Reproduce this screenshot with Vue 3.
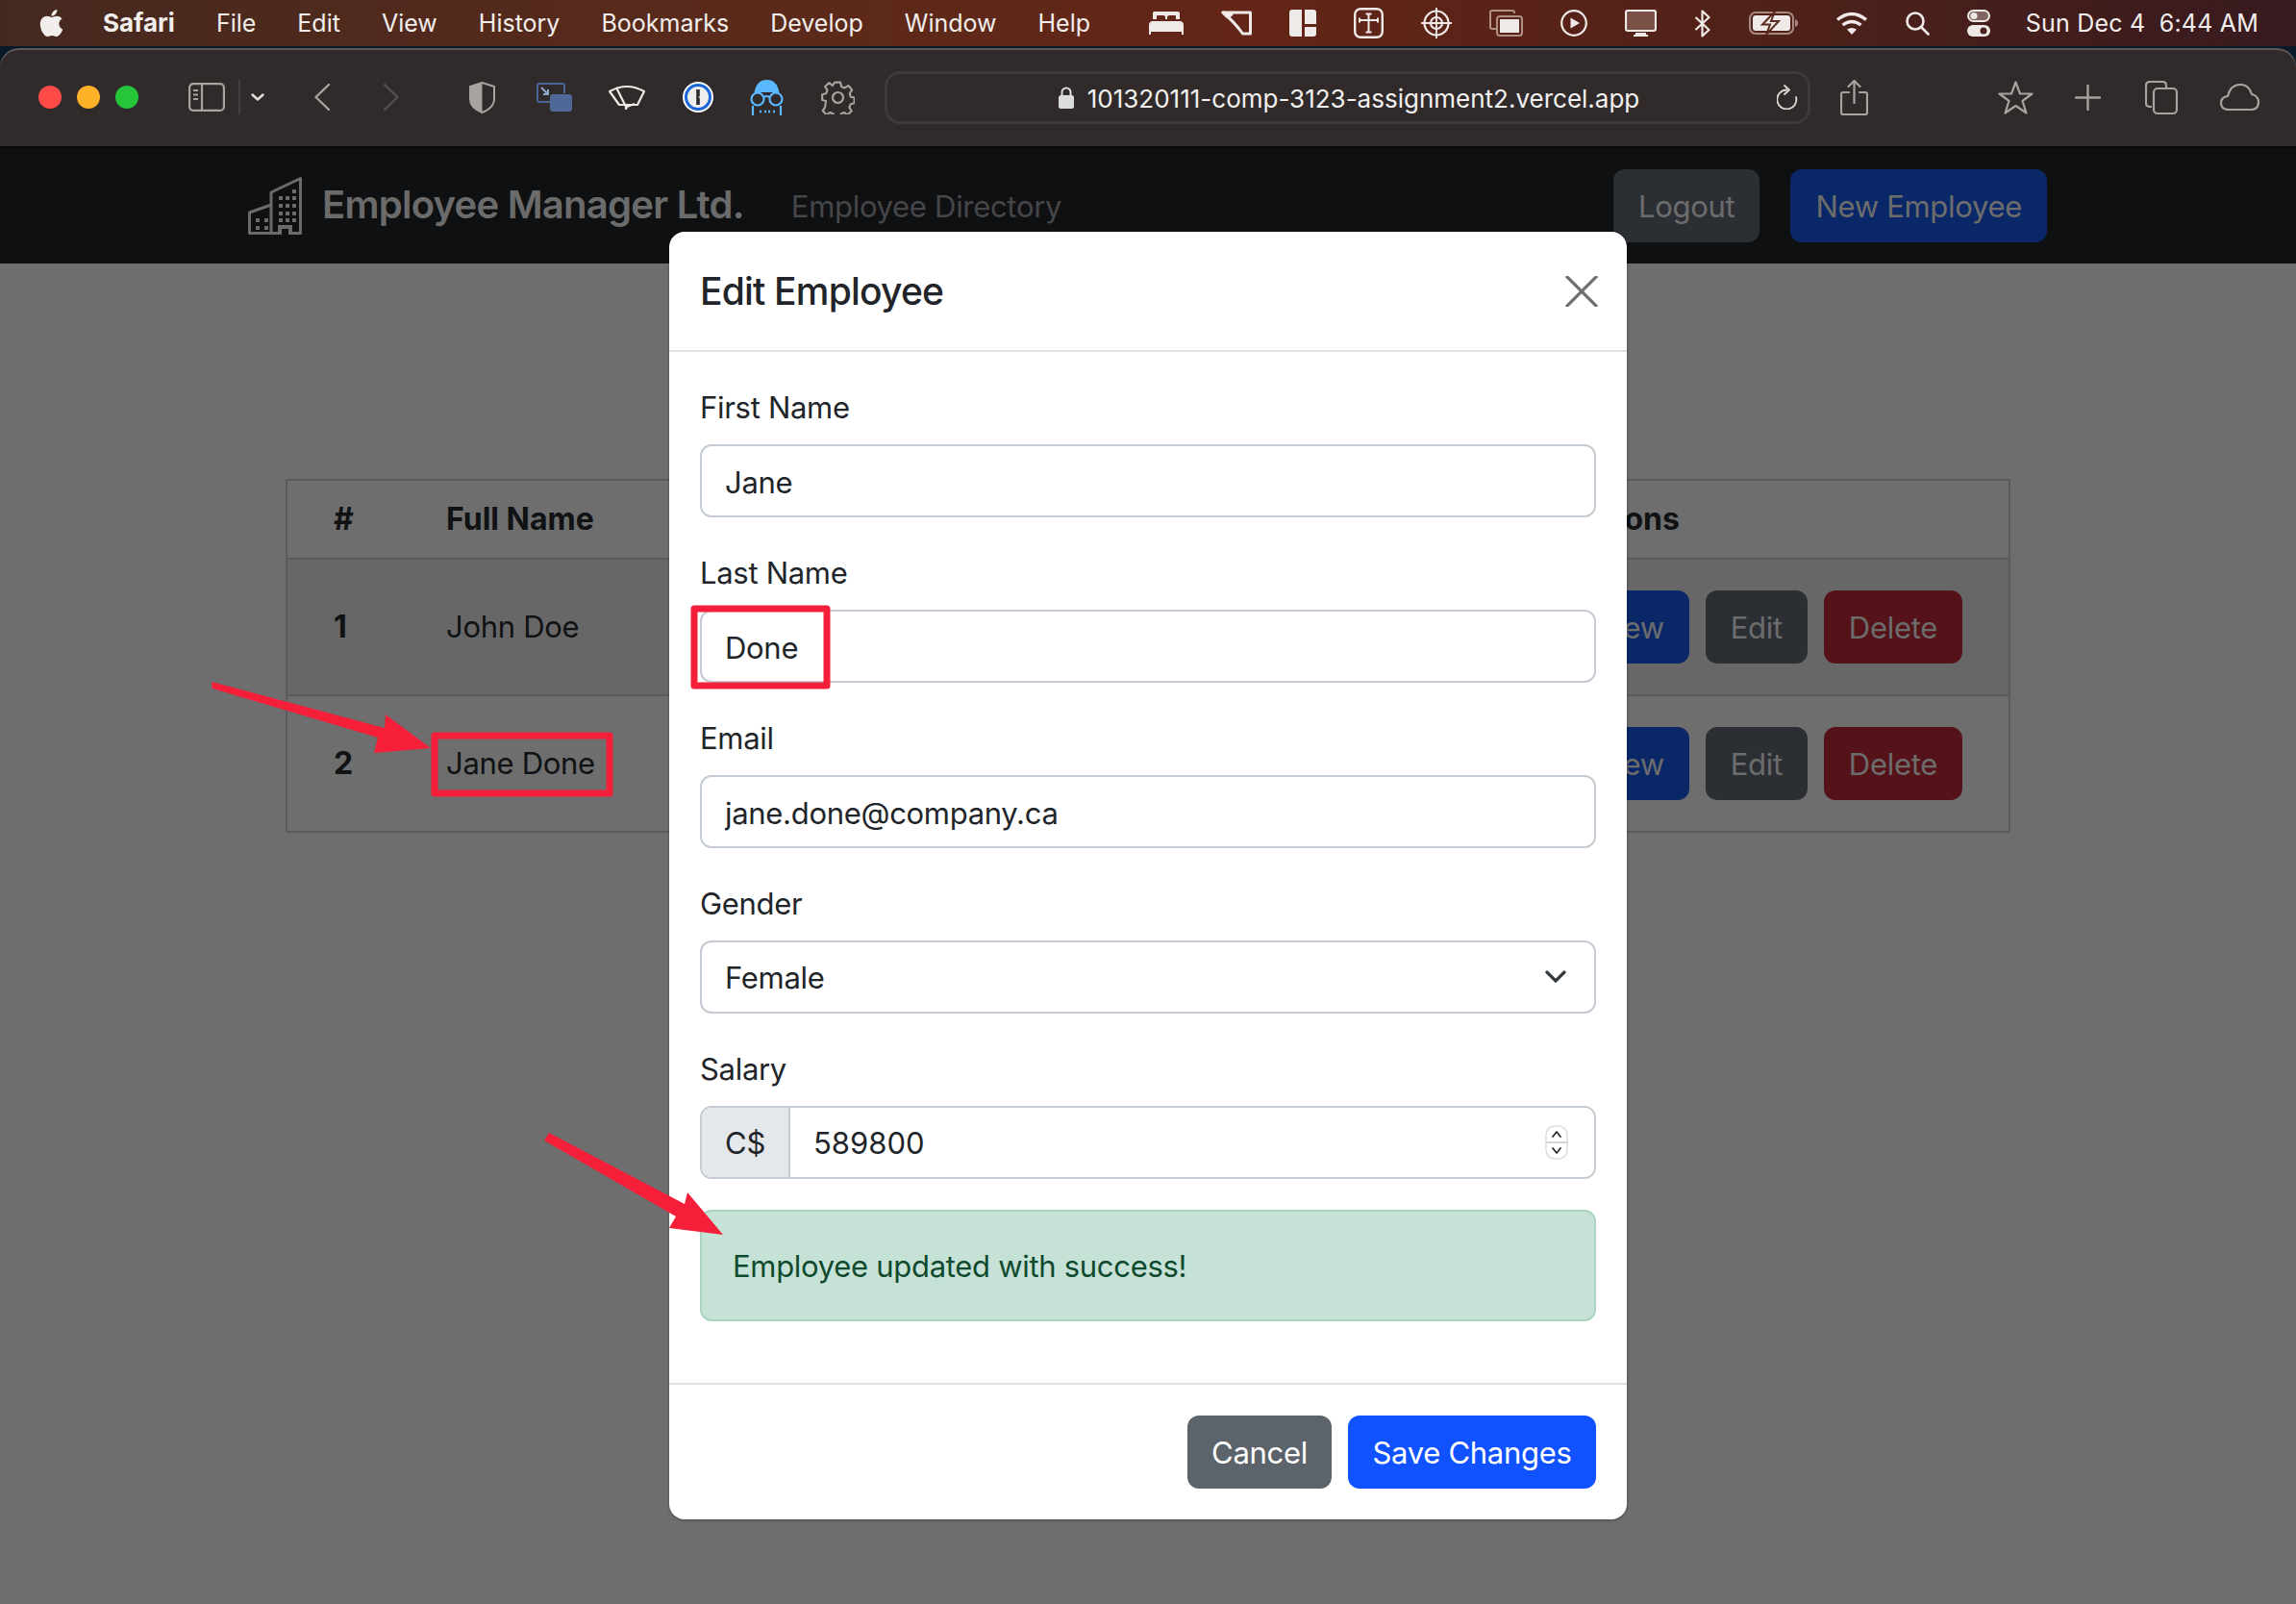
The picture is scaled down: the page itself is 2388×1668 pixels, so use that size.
<script setup>
const menus = ['File', 'Edit', 'View', 'History', 'Bookmarks', 'Develop', 'Window', 'Help']

const employees = [
  { id: 1, name: 'John Doe', email: 'john.doe@company.ca', striped: true },
  { id: 2, name: 'Jane Done', email: 'jane.done@company.ca', striped: false },
]

const fields = [
  { label: 'First Name', value: 'Jane' },
  { label: 'Last Name', value: 'Done' },
  { label: 'Email', value: 'jane.done@company.ca' },
]

const towerWindows = [[46, 13]]
for (const y of [20, 28, 36, 43]) {
  for (const x of [32, 39, 46]) towerWindows.push([x, y])
}
const blockWindows = [[8, 43], [17, 43], [8, 51], [17, 51]]
</script>

<template>
  <div class="screen">
    <header class="menubar">
      <div class="menubar__left">
        <svg class="apple" width="27" height="32" viewBox="0 0 384 512" fill="#f1eeec">
          <path d="M318.7 268.7c-.2-36.7 16.4-64.4 50-84.8-18.8-26.9-47.2-41.7-84.7-44.6-35.5-2.8-74.3 20.7-88.5 20.7-15 0-49.4-19.7-76.4-19.7C63.3 141.2 4 184.8 4 273.5q0 39.3 14.4 81.2c12.8 36.7 59 126.7 107.2 125.2 25.2-.6 43-17.9 75.8-17.9 31.8 0 48.3 17.9 76.4 17.9 48.6-.7 90.4-82.5 102.6-119.3-65.2-30.7-61.7-90-61.7-91.9zm-56.6-164.2c27.3-32.4 24.8-61.9 24-72.5-24.1 1.4-52 16.4-67.9 34.9-17.5 19.8-27.8 44.3-25.6 71.9 26.1 2 49.9-11.4 69.5-34.3z" />
        </svg>
        <strong class="menubar__app">Safari</strong>
        <span v-for="m in menus" :key="m">{{ m }}</span>
      </div>
      <div class="menubar__right">
        <div class="status">
          <!-- bed -->
          <svg width="36" height="24" viewBox="0 0 36 24" fill="#efeae8">
            <path d="M4 1.500Q4 0 6 0h24q2 0 2 1.500V8h-4V5q0-1-1-1h-6q-2 0-2 2v2h-2V6q0-2-2-2H9Q8 4 8 5v3H4zM3 10h30q3 1 3 4v10h-2v-3H2v3H0V14q0-3 3-4z" />
          </svg>
          <!-- cone -->
          <svg width="32" height="26" viewBox="0 0 32 26" fill="none" stroke="#efeae8" stroke-width="3" stroke-linejoin="round">
            <path d="M2 2h28.500v22h-8Q14 12 2 2z" />
            <path d="M2 2l9 2-4 3z" fill="#efeae8" />
          </svg>
          <!-- layout -->
          <svg width="28" height="28" viewBox="0 0 28 28" fill="#efeae8">
            <path d="M3 0h10v28H3q-3 0-3-3V3q0-3 3-3zM16 0h9q3 0 3 3v12H16zM16 18h12v7q0 3-3 3h-9z" />
          </svg>
          <!-- framed cross -->
          <svg width="31" height="32" viewBox="0 0 31 32" fill="none" stroke="#efeae8" stroke-width="2">
            <rect x="1.200" y="1.200" width="28.600" height="29.600" rx="6" stroke-width="2.400" />
            <path d="M15.500 6v19M6 13h19M12.500 6.500h6M12.500 25.500h6M6 10.500v5M25 10.500v5" />
          </svg>
          <!-- target -->
          <svg width="32" height="32" viewBox="0 0 32 32" fill="none" stroke="#efeae8" stroke-width="2.200">
            <circle cx="16" cy="16" r="12.500" />
            <circle cx="16" cy="16" r="6" />
            <path d="M16 0v32M0 16h32" stroke-width="1.800" />
          </svg>
          <!-- windows -->
          <svg width="35" height="28" viewBox="0 0 35 28">
            <path d="M26 4V3q0-2-2-2H3Q1 1 1 3v15q0 2 2 2h4" fill="none" stroke="#b08f86" stroke-width="2" />
            <rect x="8" y="7" width="26" height="20" rx="3" fill="none" stroke="#b08f86" stroke-width="2" />
            <rect x="11" y="10" width="20" height="14" fill="#efeae8" />
          </svg>
          <!-- play -->
          <svg width="28" height="28" viewBox="0 0 28 28" fill="none" stroke="#efeae8" stroke-width="2.200">
            <circle cx="14" cy="14" r="12.800" />
            <path d="M10.500 8.500l9.500 5.500-9.500 5.500z" fill="#efeae8" stroke="none" />
          </svg>
          <!-- monitor -->
          <svg width="33" height="28" viewBox="0 0 33 28">
            <rect x="1" y="1" width="31" height="21" rx="2" fill="#7a4f46" stroke="#efeae8" stroke-width="2.200" />
            <path d="M11 24h11v2h2v2H9v-2h2z" fill="#efeae8" />
          </svg>
          <!-- bluetooth -->
          <svg width="18" height="29" viewBox="0 0 18 29" fill="none" stroke="#efeae8" stroke-width="2.200" stroke-linejoin="round">
            <path d="M1.500 8l14 13-7 6.500V1.500l7 6.500-14 13" />
          </svg>
          <!-- battery -->
          <svg width="51" height="24" viewBox="0 0 51 24">
            <rect x="1" y="1" width="45" height="22" rx="6" fill="none" stroke="#a98a83" stroke-width="2" />
            <rect x="4" y="4" width="39" height="16" rx="3" fill="#efeae8" />
            <path d="M48 8q3 1 3 4t-3 4z" fill="#a98a83" />
            <path d="M27 0L14 13.500h8L18 24l13-14h-8z" fill="#efeae8" stroke="#5a2a20" stroke-width="2" />
          </svg>
          <!-- wifi -->
          <svg width="34" height="25" viewBox="0 0 34 25" fill="none" stroke="#efeae8" stroke-width="3.400">
            <path d="M2 8.500q15-12 30 0M7.500 14q9.500-7 19 0" />
            <path d="M12 18.500q5-3 10 0l-5 5.500z" fill="#efeae8" stroke="none" />
          </svg>
          <!-- search -->
          <svg width="25" height="25" viewBox="0 0 25 25" fill="none" stroke="#efeae8" stroke-width="2.600" stroke-linecap="round">
            <circle cx="10" cy="10" r="8.500" />
            <path d="M16.500 16.500l7 7" />
          </svg>
          <!-- control centre -->
          <svg width="24" height="28" viewBox="0 0 24 28">
            <rect x="1" y="1" width="22" height="11" rx="5.500" fill="#efeae8" fill-opacity=".35" stroke="#efeae8" stroke-width="2" />
            <circle cx="7" cy="6.500" r="3.500" fill="#efeae8" />
            <rect x="0" y="16" width="24" height="12" rx="6" fill="#efeae8" />
            <circle cx="17" cy="22" r="3.500" fill="#4a2320" />
          </svg>
        </div>
        <span class="menubar__clock">Sun Dec 4&nbsp; 6:44 AM</span>
      </div>
    </header>

    <div class="window">
      <div class="toolbar">
        <div class="lights">
          <i class="light light--red"></i>
          <i class="light light--yellow"></i>
          <i class="light light--green"></i>
        </div>

        <div class="sidebar-btn">
          <svg width="38" height="30" viewBox="0 0 38 30" fill="none" stroke="#a8a3a1" stroke-width="2.200">
            <rect x="1.100" y="1.100" width="35.800" height="27.800" rx="4" />
            <path d="M14 1v28" />
            <path d="M5 8h5M5 12.500h5M5 17h5" stroke-width="1.800" />
          </svg>
          <span class="sidebar-btn__rule"></span>
          <svg width="14" height="8" viewBox="0 0 14 8" fill="none" stroke="#e0dcda" stroke-width="2.400" stroke-linecap="round" stroke-linejoin="round">
            <path d="M1.500 1.500L7 6.500l5.500-5" />
          </svg>
        </div>

        <div class="nav-arrows">
          <svg width="16" height="28" viewBox="0 0 16 28" fill="none" stroke="#a8a3a1" stroke-width="2.400" stroke-linecap="round" stroke-linejoin="round">
            <path d="M15 1L1.500 14 15 27" />
          </svg>
          <svg width="16" height="28" viewBox="0 0 16 28" fill="none" stroke="#55504f" stroke-width="2.400" stroke-linecap="round" stroke-linejoin="round">
            <path d="M1 1l13.500 13L1 27" />
          </svg>
        </div>

        <div class="extensions">
          <!-- shield -->
          <svg class="shield" width="27" height="33" viewBox="0 0 27 33">
            <path d="M13.500 1L26 5v13q0 9-12.500 14Q1 27 1 18V5z" fill="none" stroke="#a8a3a1" stroke-width="2" />
            <path d="M13.500 1v31Q1 27 1 18V5z" fill="#a8a3a1" />
          </svg>
          <!-- picture in picture -->
          <svg width="37" height="30" viewBox="0 0 37 30">
            <path d="M14 20H3q-2 0-2-2V3q0-2 2-2h24q2 0 2 2v8" fill="none" stroke="#4a6496" stroke-width="2" />
            <rect x="14" y="12" width="23" height="18" rx="3" fill="#4f6897" />
            <path d="M5 5l7 7M12 7v5H7" fill="none" stroke="#8fa6cf" stroke-width="2" />
          </svg>
          <!-- wiper -->
          <svg width="38" height="28" viewBox="0 0 38 28" fill="none" stroke="#ece8e6" stroke-width="2.200" stroke-linejoin="round">
            <path d="M1 8Q19-2 37 8l-7 14H11z" fill="none" />
            <path d="M8 4l11 22M18 27v-4M19 24l8-3" />
          </svg>
          <!-- 1password -->
          <svg width="32" height="32" viewBox="0 0 32 32">
            <circle cx="16" cy="16" r="16" fill="#fff" />
            <circle cx="16" cy="16" r="12.500" fill="#eeeeee" stroke="#1a66d8" stroke-width="3" />
            <path d="M14.200 8h3.600v7l-1.500 1 1.500 1v7h-3.600z" fill="#2b2b2b" />
          </svg>
          <!-- glasses ghost -->
          <svg width="35" height="37" viewBox="0 0 35 37" fill="none" stroke="#5ab8ff" stroke-width="2.200">
            <path d="M4.500 13Q7 0 17.500 0T30.500 13z" fill="#5ab8ff" stroke="none" />
            <circle cx="8" cy="20" r="6.500" />
            <circle cx="27" cy="20" r="6.500" />
            <path d="M14.500 18q3-2 6 0M3 27v10M32 27v10" />
            <path d="M10 33h2M15 33h2M19 33h2M24 33h2" stroke-width="2.400" />
          </svg>
          <!-- gear -->
          <svg width="35" height="35" viewBox="0 0 35 35" fill="none" stroke="#a8a3a1" stroke-width="2.200" stroke-linejoin="round">
            <path d="M14.500 1.500h6l1 4.500 3.500 1.500 4-2.500 4 4.500-2.500 4 1 3.500 4 .8v6l-4 1-1.500 3.500 2.500 4-4.500 4-3.500-2.500-3.500 1.500-1 4h-6l-1-4-3.500-1.500-4 2.500-4-4.500 2.500-3.500L5 21.500l-4-1v-6l4-1L6.500 10 4 6l4.500-4L12 5z" transform="scale(.97) translate(.2 .2)" />
            <circle cx="17.500" cy="17.500" r="5.500" />
          </svg>
        </div>

        <div class="address">
          <span></span>
          <span class="address__url">
            <svg width="16" height="23" viewBox="0 0 16 23">
              <path d="M3.500 10V6a4.500 4.500 0 0 1 9 0v4" fill="none" stroke="#dcdcdc" stroke-width="2" />
              <rect x="0" y="9" width="16" height="14" rx="2.500" fill="#dcdcdc" />
            </svg>
            <span class="address__text">101320111-comp-3123-assignment2.vercel.app</span>
          </span>
          <svg class="address__reload" width="22" height="26" viewBox="0 0 22 26" fill="none" stroke="#dedbd9" stroke-width="1.800" stroke-linecap="round" stroke-linejoin="round">
            <path d="M10 5.500A10 10 0 1 0 20 13M8 1l5 4.500L8 10" />
          </svg>
        </div>

        <svg class="share" width="29" height="37" viewBox="0 0 29 37" fill="none" stroke="#a8a3a1" stroke-width="2.200" stroke-linecap="round" stroke-linejoin="round">
          <path d="M9 13H3q-2 0-2 2v19q0 2 2 2h23q2 0 2-2V15q0-2-2-2h-6M14.500 24V1M8.500 7l6-6 6 6" />
        </svg>

        <div class="tab-actions">
          <svg width="37" height="35" viewBox="0 0 37 35" fill="none" stroke="#a8a3a1" stroke-width="2.200" stroke-linejoin="round">
            <path d="M18.500 1.500l4.500 12h12.500l-10 7.500 4 12.500-11-7.500-11 7.500 4-12.500-10-7.500H14z" />
          </svg>
          <svg class="plus" width="27" height="27" viewBox="0 0 27 27" stroke="#a8a3a1" stroke-width="2.400" stroke-linecap="round">
            <path d="M13.500 1v25M1 13.500h25" />
          </svg>
          <svg class="tabs" width="34" height="35" viewBox="0 0 34 35" fill="none" stroke="#a8a3a1" stroke-width="2.200">
            <path d="M7 27H5q-4 0-4-4V5q0-4 4-4h13q4 0 4 4v2" />
            <rect x="9" y="8" width="24" height="26" rx="4" />
          </svg>
          <svg class="cloud" width="41" height="28" viewBox="0 0 41 28" fill="none" stroke="#a8a3a1" stroke-width="2.200" stroke-linejoin="round">
            <path d="M9 27Q1 27 1 20q0-6 7-7Q11 1 21 1q9 0 12 10 7 2 7 8 0 8-8 8z" />
          </svg>
        </div>
      </div>

      <div class="page">
        <nav class="navbar">
          <div class="navbar__brand">
            <svg width="56" height="60" viewBox="0 0 56 60">
              <path d="M24 29L1.500 37v21.500h53V1.500L24 16zM24 16v42" fill="none" stroke="#d6d6d6" stroke-width="3" stroke-linejoin="round" />
              <rect x="31" y="50" width="15" height="10" fill="#d6d6d6" />
              <rect x="35" y="54" width="7" height="6" fill="#1e2024" />
              <rect v-for="(w, i) in towerWindows" :key="'t' + i" :x="w[0]" :y="w[1]" width="4" height="4" fill="#d6d6d6" />
              <rect v-for="(w, i) in blockWindows" :key="'b' + i" :x="w[0]" :y="w[1]" width="4" height="4" fill="#d6d6d6" />
            </svg>
            <span class="navbar__title">Employee Manager Ltd.</span>
            <span class="navbar__sub">Employee Directory</span>
          </div>
          <div class="navbar__actions">
            <button class="btn btn--grey">Logout</button>
            <button class="btn btn--blue">New Employee</button>
          </div>
        </nav>

        <main class="content">
          <table class="table">
            <colgroup>
              <col class="col-id" />
              <col class="col-name" />
              <col class="col-email" />
              <col />
            </colgroup>
            <thead>
              <tr>
                <th>#</th>
                <th>Full Name</th>
                <th>Email</th>
                <th>Actions</th>
              </tr>
            </thead>
            <tbody>
              <tr v-for="e in employees" :key="e.id" :class="{ striped: e.striped }">
                <th>{{ e.id }}</th>
                <td>{{ e.name }}</td>
                <td>{{ e.email }}</td>
                <td>
                  <div class="table__actions">
                    <button class="btn btn--blue">View</button>
                    <button class="btn btn--grey">Edit</button>
                    <button class="btn btn--red">Delete</button>
                  </div>
                </td>
              </tr>
            </tbody>
          </table>
        </main>

        <div class="backdrop"></div>

        <section class="modal">
          <header class="modal__header">
            <h5 class="modal__title">Edit Employee</h5>
            <svg width="34" height="32" viewBox="0 0 34 32" fill="none" stroke="#6f6f6f" stroke-width="3.200">
              <path d="M1 0l32 32M33 0L1 32" />
            </svg>
          </header>

          <div class="modal__body">
            <div v-for="f in fields" :key="f.label" class="field">
              <label class="field__label">{{ f.label }}</label>
              <input class="control" type="text" :value="f.value" />
            </div>

            <div class="field">
              <label class="field__label">Gender</label>
              <div class="select">
                <select class="control control--select">
                  <option>Female</option>
                  <option>Male</option>
                </select>
                <svg class="select__chevron" width="22" height="14" viewBox="0 0 22 14" fill="none" stroke="#343a40" stroke-width="3.200" stroke-linecap="round" stroke-linejoin="round">
                  <path d="M2 2l9 9 9-9" />
                </svg>
              </div>
            </div>

            <div class="field">
              <label class="field__label">Salary</label>
              <div class="group">
                <span class="group__addon">C$</span>
                <input class="group__input" type="text" value="589800" />
                <svg class="group__spin" width="24" height="36" viewBox="0 0 24 36">
                  <rect x="1" y="1" width="22" height="34" rx="9" fill="#fff" stroke="#dcdcdc" stroke-width="1.500" />
                  <path d="M1 18h22" stroke="#d4d4d4" stroke-width="2" />
                  <path d="M8 12l4-5 4 5M8 24l4 5 4-5" fill="none" stroke="#2c2c2c" stroke-width="1.800" stroke-linecap="round" stroke-linejoin="round" />
                </svg>
              </div>
            </div>

            <div class="alert">Employee updated with success!</div>
          </div>

          <footer class="modal__footer">
            <button class="btn btn--cancel">Cancel</button>
            <button class="btn btn--save">Save Changes</button>
          </footer>
        </section>
      </div>
    </div>

    <!-- red annotations drawn over the screenshot -->
    <svg class="markup" width="2388" height="1668" viewBox="0 0 2388 1668">
      <g fill="#f51f3a">
        <path d="M220 709L400 757 401 743 448 778 389 783 393 767 221 716z" />
        <path d="M571 1178L712 1252 715 1240 752 1284 696 1277 703 1265 566 1186z" />
      </g>
      <g fill="none" stroke="#f51f3a" stroke-width="7" stroke-linejoin="round">
        <rect x="452" y="765" width="182" height="60" />
        <rect x="722" y="633" width="138" height="80" />
      </g>
    </svg>
  </div>
</template>

<style>
html, body { margin: 0; background: #0b1a28; }
</style>

<style scoped>
.screen {
  position: relative; width: 2388px; height: 1668px;
  overflow: hidden; display: flex; flex-direction: column;
  font-family: Inter, "Liberation Sans", sans-serif;
  background: #0b1a28;
}

.menubar {
  height: 48px; flex-shrink: 0;
  display: flex; align-items: center; justify-content: space-between;
  padding: 0 39px 0 40px;
  background: linear-gradient(90deg, #45291f 0%, #5c2a1a 35%, #632517 55%, #4e2119 78%, #371a1f 100%);
  color: #f1eeec; font-size: 25px; line-height: 1;
}
.menubar__left { display: flex; align-items: center; gap: 43px; }
.apple { margin-right: -3px; }
.menubar__app { font-size: 26px; font-weight: 700; }
.menubar__right { display: flex; align-items: center; gap: 37px; }
.menubar__clock { white-space: nowrap; letter-spacing: 0.2px; }
.status { display: flex; align-items: center; gap: 39px; }

.window {
  flex: 1; margin-top: 2px; min-height: 0;
  display: flex; flex-direction: column;
  border-radius: 20px 20px 0 0; overflow: hidden;
  background: #302b2a;
  box-shadow: inset 0 2px 0 #5e5957;
}

.toolbar {
  height: 102px; flex-shrink: 0; display: flex; align-items: center;
  padding-left: 40px;
  border-bottom: 2px solid #0a0a0a;
}
.lights { display: flex; gap: 16px; }
.light { width: 24px; height: 24px; border-radius: 50%; display: block; }
.light--red { background: #ff4a48; }
.light--yellow { background: #ffb128; }
.light--green { background: #27c63a; }

.sidebar-btn { display: flex; align-items: center; gap: 11px; margin-left: 52px; }
.sidebar-btn__rule { width: 2px; height: 36px; margin-left: 3px; background: #443f3e; }

.nav-arrows { display: flex; gap: 56px; margin-left: 52px; }

.extensions { display: flex; align-items: center; gap: 38.5px; margin-left: 73px; }
.shield { margin-right: 4px; }

.address {
  width: 963px; height: 55px; margin-left: 31px; box-sizing: border-box;
  display: grid; grid-template-columns: 1fr auto 1fr; align-items: center;
  border: 3px solid #3f3a39; border-radius: 16px;
  color: #f3f1f0; font-size: 26px;
}
.address__url { display: flex; align-items: center; gap: 14px; white-space: nowrap; margin-left: 4px; }
.address__text { padding-top: 2px; }
.address__reload { justify-self: end; margin-right: 10px; }

.share { margin-left: 31px; }
.tab-actions { display: flex; align-items: center; margin-left: 135px; }
.plus { margin-left: 43px; }
.tabs { margin-left: 46px; }
.cloud { margin-left: 44px; }

.page {
  position: relative; flex: 1; min-height: 0;
  background: #dcdcdc; color: #212529;
  font-size: 31px; line-height: 48px; letter-spacing: -0.3px;
}

.navbar {
  height: 120px; box-sizing: border-box;
  display: flex; align-items: center; justify-content: space-between;
  padding: 0 259px 0 258px;
  background: #1e2024;
}
.navbar__brand { display: flex; align-items: center; }
.navbar__title { margin: -2px 0 0 21px; color: #d6d6d6; font-size: 40px; font-weight: 600; letter-spacing: -0.75px; }
.navbar__sub { margin-left: 49px; padding-top: 1px; color: #8a8c90; }
.navbar__actions { display: flex; gap: 32px; }

.btn {
  height: 76px; padding: 2px 26px 0; border: 0; border-radius: 12px; box-sizing: border-box;
  font: inherit; letter-spacing: inherit; color: #d9d9d9; white-space: nowrap;
}
.btn--grey { background: #565c66; }
.btn--blue { background: #1450d0; }
.btn--red { background: #aa2430; }
.btn--cancel { background: #5c636a; color: #fff; width: 150px; padding: 2px 0 0; }
.btn--save { background: #1052ff; color: #fff; width: 258px; padding: 2px 0 0; }

.content { padding: 224px 297px 0 297px; }
.table { width: 100%; border-collapse: collapse; table-layout: fixed; border: 2px solid #b0b4ba; }
.col-id { width: 118px; }
.col-name { width: 460px; }
.col-email { width: 703px; }
.table th, .table td { padding: 16px 48px; text-align: left; border-bottom: 2px solid #b0b4ba; }
.table th { font-weight: 700; font-size: 32px; letter-spacing: 0; }
.table tbody tr { height: 142px; }
.table thead th { height: 81px; box-sizing: border-box; }
.striped { background: #cecece; }
.table__actions { display: flex; gap: 17px; justify-content: flex-end; }

.backdrop { position: absolute; inset: 0; background: rgba(0, 0, 0, 0.5); }

.modal {
  position: absolute; left: 696px; top: 87px; width: 996px;
  background: #fff; border-radius: 16px;
  box-shadow: 0 1px 3px rgba(0, 0, 0, 0.35);
}
.modal__header {
  height: 125px; box-sizing: border-box;
  display: flex; align-items: center; justify-content: space-between;
  padding: 0 30px 0 32px; border-bottom: 2px solid #dee2e6;
}
.modal__title { margin: 0; font-size: 39px; line-height: 60px; font-weight: 500; letter-spacing: -0.8px; }
.modal__body { padding: 32px; }
.field { margin-bottom: 32px; }
.field__label { display: block; margin-bottom: 14px; padding-top: 2px; }

.control {
  display: block; width: 100%; height: 76px; box-sizing: border-box;
  padding: 2px 24px 0; border: 2px solid #c5cbd3; border-radius: 12px;
  background: #fff; color: #212529; font: inherit; letter-spacing: inherit; outline: none;
}
.select { position: relative; }
.control--select { appearance: none; }
.select__chevron { position: absolute; right: 31px; top: 31px; }

.group {
  position: relative; display: flex; height: 76px; box-sizing: border-box;
  border: 2px solid #c5cbd3; border-radius: 12px; overflow: hidden;
}
.group__addon {
  width: 90px; flex-shrink: 0; display: flex; align-items: center; justify-content: center;
  padding-top: 2px; background: #e4e7eb; border-right: 2px solid #c5cbd3;
}
.group__input {
  flex: 1; min-width: 0; padding: 2px 24px 0; border: 0; outline: none;
  color: #212529; font: inherit; letter-spacing: 0;
}
.group__spin { position: absolute; right: 27px; top: 18px; }

.alert {
  padding: 33px 32px 31px; border: 2px solid #abd5c0; border-radius: 12px;
  background: #c6e2d6; color: #0f4a2e; margin-bottom: 32px;
}

.modal__footer {
  display: flex; justify-content: flex-end; gap: 17px;
  padding: 32px; border-top: 2px solid #dee2e6;
}

.markup { position: absolute; left: 0; top: 0; pointer-events: none; }
</style>
